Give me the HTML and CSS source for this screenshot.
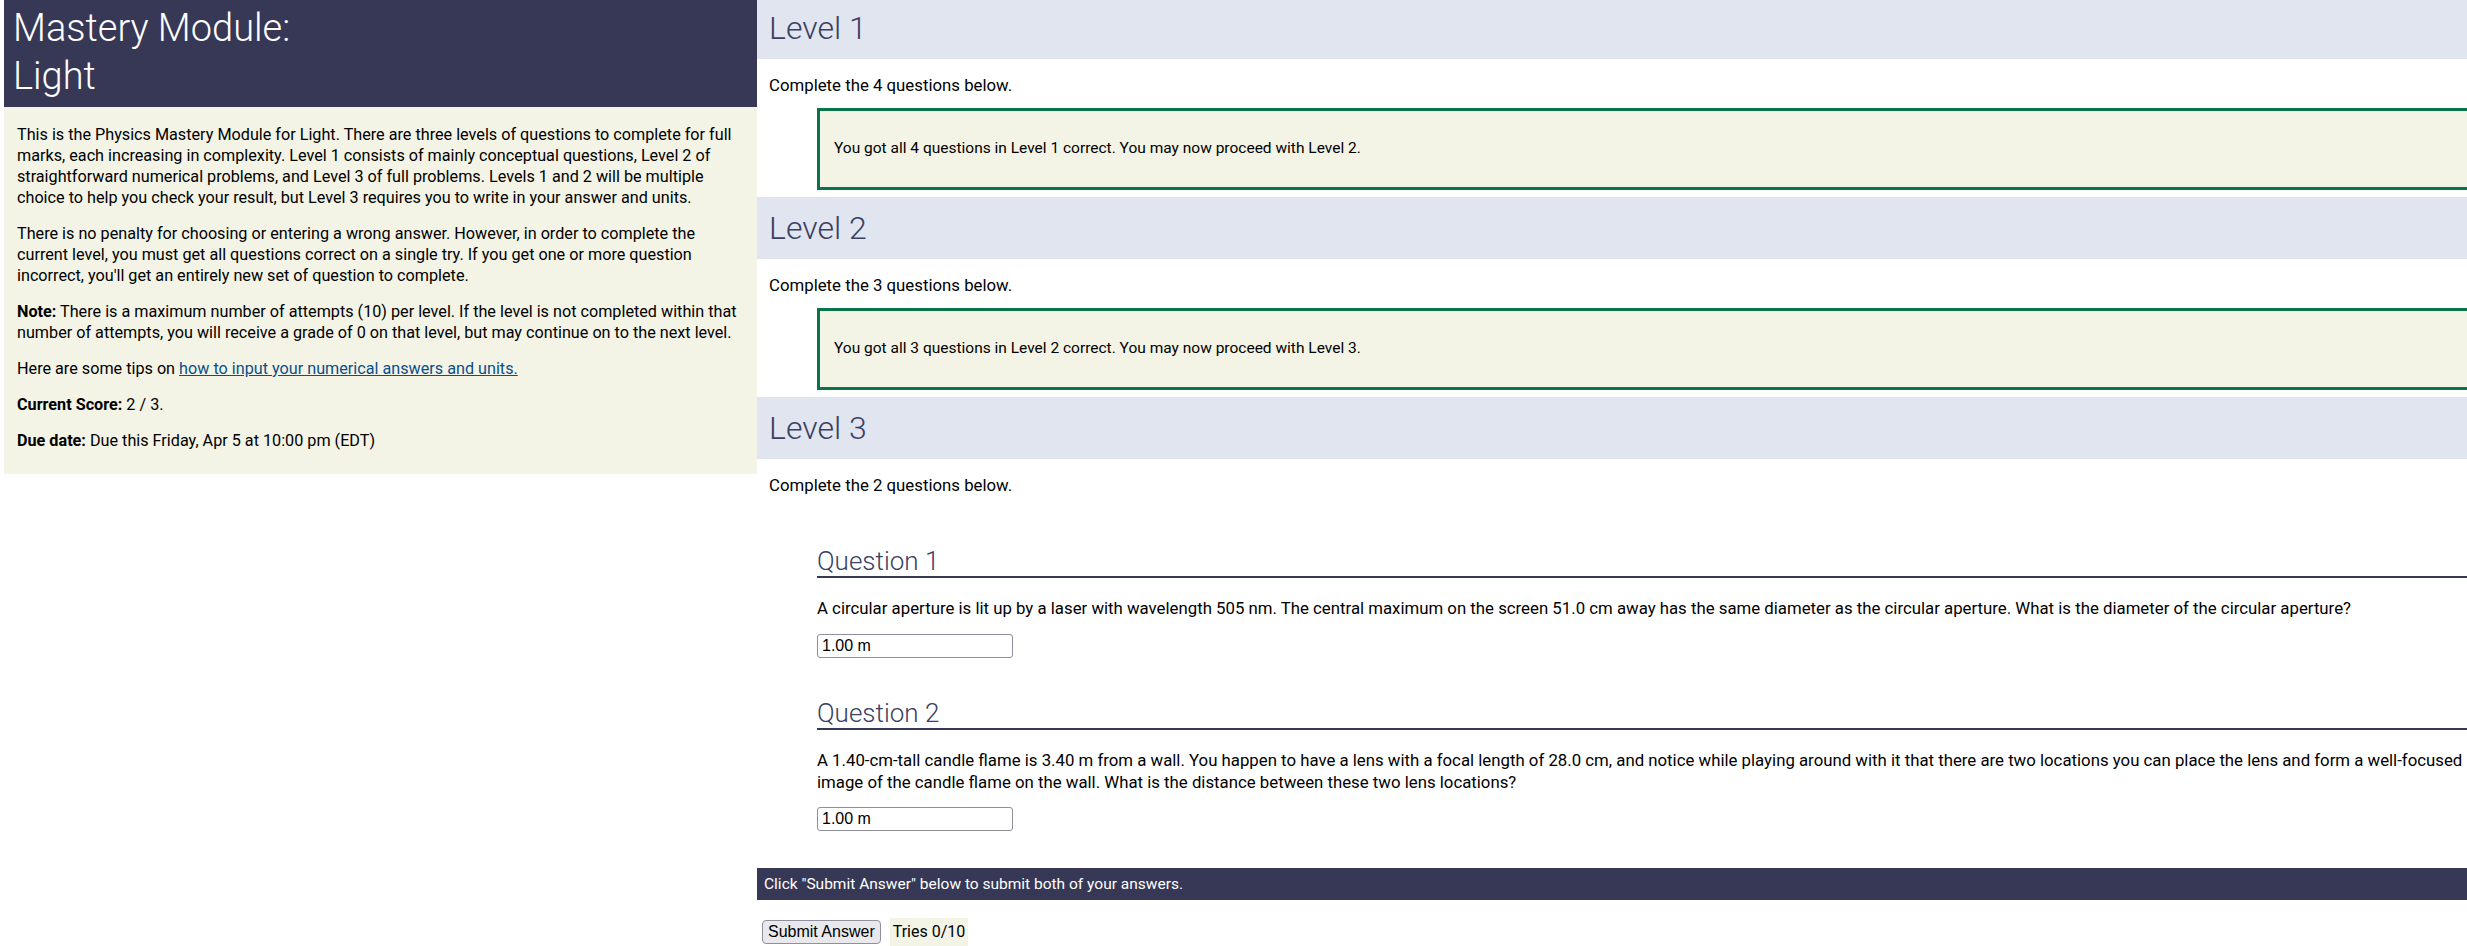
FILE: index.html
```html
<!DOCTYPE html>
<html lang="en">
<head>
    <meta charset="UTF-8">
    <meta name="viewport" content="width=device-width, initial-scale=1.0">
    <title>Mastery Module: Light</title>
    <link rel="stylesheet" href="styles.css">
</head>
<body>

    <div class="page">

        <!-- 왼쪽 안내 -->
        <div class="sidebar">
            <div class="title">Mastery Module:<br>Light</div>
            <div class="info">
                <p>This is the Physics Mastery Module for Light. There are three levels of questions to complete for full marks, each increasing in complexity. Level 1 consists of mainly conceptual questions, Level 2 of straightforward numerical problems, and Level 3 of full problems. Levels 1 and 2 will be multiple choice to help you check your result, but Level 3 requires you to write in your answer and units.</p>
                <p>There is no penalty for choosing or entering a wrong answer. However, in order to complete the current level, you must get all questions correct on a single try. If you get one or more question incorrect, you'll get an entirely new set of question to complete.</p>
                <p><b>Note:</b> There is a maximum number of attempts (10) per level. If the level is not completed within that number of attempts, you will receive a grade of 0 on that level, but may continue on to the next level.</p>
                <p>Here are some tips on <a href="#">how to input your numerical answers and units.</a></p>
                <p><b>Current Score:</b> 2 / 3.</p>
                <p><b>Due date:</b> Due this Friday, Apr 5 at 10:00 pm (EDT)</p>
            </div>
        </div>

        <!-- 레벨 -->
        <div class="main">
            <div class="level">
                <h2>Level 1</h2>
                <p class="intro">Complete the 4 questions below.</p>
                <div class="passed"><p>You got all 4 questions in Level 1 correct. You may now proceed with Level 2.</p></div>
            </div>

            <div class="level">
                <h2>Level 2</h2>
                <p class="intro">Complete the 3 questions below.</p>
                <div class="passed"><p>You got all 3 questions in Level 2 correct. You may now proceed with Level 3.</p></div>
            </div>

            <div class="level">
                <h2>Level 3</h2>
                <p class="intro">Complete the 2 questions below.</p>

                <div class="question">
                    <h3>Question 1</h3>
                    <p>A circular aperture is lit up by a laser with wavelength 505 nm. The central maximum on the screen 51.0 cm away has the same diameter as the circular aperture. What is the diameter of the circular aperture?</p>
                    <input type="text" value="1.00 m">
                </div>

                <div class="question q2">
                    <h3>Question 2</h3>
                    <p>A 1.40-cm-tall candle flame is 3.40 m from a wall. You happen to have a lens with a focal length of 28.0 cm, and notice while playing around with it that there are two locations you can place the lens and form a well-focused image of the candle flame on the wall. What is the distance between these two lens locations?</p>
                    <input type="text" value="1.00 m">
                </div>
            </div>

            <div class="submit-note">Click "Submit Answer" below to submit both of your answers.</div>
            <div class="submit-row">
                <button>Submit Answer</button>
                <span class="tries">Tries 0/10</span>
            </div>
        </div>

    </div>

</body>
</html>
```

FILE: styles.css
```css
body {
    margin: 0;
    font-family: Roboto, "Liberation Sans", sans-serif;
    font-size: 16px;
    color: #000;
    overflow: hidden;
}
.page {
    display: flex;
    align-items: flex-start;
    padding-left: 4px;
}

/* 왼쪽 */
.sidebar {
    width: 753px;
    flex-shrink: 0;
}
.title {
    background: #363856;
    color: #fff;
    font-size: 38px;
    font-weight: 300;
    line-height: 48px;
    padding: 4px 9px 7px;
}
.info {
    background: #f3f4e6;
    padding: 2px 13px 8px;
    font-size: 16.2px;
    line-height: 21px;
}
.info p {
    margin: 15px 0;
}
.info a {
    color: #0b4f8a;
}

/* 오른쪽 */
.main {
    width: 1760px;
    flex-shrink: 0;
    margin-top: -3px;
    line-height: 21px;
}
.level h2 {
    margin: 0;
    height: 62px;
    line-height: 62px;
    padding: 0 12px;
    background: #e1e5ef;
    color: #3b3f62;
    font-size: 32px;
    font-weight: 300;
}
.intro {
    margin: 16px 12px 12px;
    font-size: 16.8px;
}
.passed {
    margin: 0 0 7px 60px;
    border: 3px solid #08744a;
    background: #f3f4e6;
    padding: 27px 14px 28px;
    font-size: 15.5px;
}
.passed p {
    margin: 0;
}

.question {
    margin: 0 30px 0 60px;
    padding-top: 38px;
    font-size: 16.8px;
}
.question.q2 {
    padding-top: 40px;
}
.question h3 {
    margin: 0;
    font-size: 26px;
    font-weight: 300;
    line-height: 30px;
    color: #3b3f62;
    border-bottom: 2px solid #363856;
}
.question p {
    margin: 19px 0 0;
    line-height: 22px;
}
.question input {
    display: block;
    margin-top: 15px;
    width: 196px;
    height: 24px;
    box-sizing: border-box;
    border: 1px solid #8f8f9d;
    border-radius: 3px;
    padding: 0 4px;
    font-family: "Liberation Sans", Arial, sans-serif;
    font-size: 16px;
    color: #000;
}
.question.q2 input {
    margin-top: 14px;
}

.submit-note {
    margin-top: 37px;
    background: #363856;
    color: #fff;
    line-height: 32px;
    padding: 0 7px;
    font-size: 15.5px;
}
.submit-row {
    display: flex;
    align-items: center;
    margin-top: 18px;
    padding-left: 5px;
}
.submit-row button {
    height: 24px;
    padding: 0 5px;
    background: #e9e9ed;
    border: 1px solid #8f8f9d;
    border-radius: 4px;
    font-family: "Liberation Sans", Arial, sans-serif;
    font-size: 16px;
    color: #000;
}
.tries {
    margin-left: 9px;
    background: #f3f4e6;
    padding: 4px 3px;
    line-height: 20px;
    font-size: 16px;
}
```
